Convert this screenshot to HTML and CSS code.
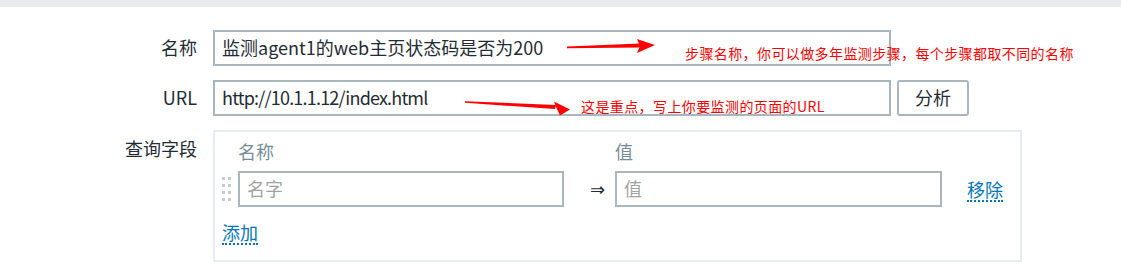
FILE: index.html
```html
<!DOCTYPE html>
<html lang="zh-CN">
<head>
<meta charset="utf-8">
<link rel="stylesheet" href="styles.css">
</head>
<body>
<div class="page">
  <div class="topband"></div>
  <form class="form">
    <div class="label">名称</div>
    <div class="field"><input class="text-input wide" type="text" value="监测agent1的web主页状态码是否为200"></div>

    <div class="label">URL</div>
    <div class="field row">
      <input class="text-input wide url" type="text" value="http://10.1.1.12/index.html">
      <button class="btn" type="button">分析</button>
    </div>

    <div class="label label-top">查询字段</div>
    <div class="field">
      <div class="qbox">
        <div class="qgrid">
          <div></div>
          <div class="qhead">名称</div>
          <div></div>
          <div class="qhead">值</div>
          <div></div>

          <div class="drag"><span></span><span></span><span></span><span></span><span></span><span></span><span></span><span></span></div>
          <input class="text-input cell" type="text" placeholder="名字">
          <div class="implies">⇒</div>
          <input class="text-input cell" type="text" placeholder="值">
          <div class="remove"><a class="link">移除</a></div>
        </div>
        <div class="add"><a class="link">添加</a></div>
      </div>
    </div>
  </form>

  <svg class="overlay" width="1121" height="277" viewBox="0 0 1121 277">
    <polygon class="arrow" points="567,46.6 640,43.4 640,47.6 567,48.2"/>
    <polygon class="arrow" points="637,39 655,45 637,53 640,46"/>
    <polygon class="arrow" points="465,101.2 556,105 555,109 465,102.8"/>
    <polygon class="arrow" points="554,101.5 570,109.5 560,115.5 556,107"/>
  </svg>
  <div class="note note1">步骤名称，你可以做多年监测步骤，每个步骤都取不同的名称</div>
  <div class="note note2">这是重点，写上你要监测的页面的URL</div>
</div>
</body>
</html>
```

FILE: styles.css
```css
* { box-sizing: border-box; }
html, body { margin: 0; padding: 0; background: #fff; }
body {
  font-family: "Noto Sans CJK SC", "Liberation Sans", sans-serif;
  font-size: 18px;
  color: #1f2c33;
}
.page {
  position: relative;
  width: 1121px;
  height: 277px;
  overflow: hidden;
}
.topband {
  height: 7px;
  background: #e9ecef;
}
.form {
  display: grid;
  grid-template-columns: 197px 1fr;
  column-gap: 16px;
  row-gap: 14px;
  padding-top: 23px;
}
.label {
  text-align: right;
  line-height: 34px;
  height: 36px;
}
.label-top {
  line-height: 24px;
  padding-top: 6px;
}
.field { display: flex; }
.row { gap: 6px; }
.text-input {
  height: 36px;
  border: 2px solid #aab6bd;
  padding: 0 7px 2px;
  font: inherit;
  color: #1f2c33;
  background: #fff;
  outline: none;
  margin: 0;
}
.url { letter-spacing: -0.8px; }
.text-input::placeholder { color: #a3a3a3; }
.wide { width: 678px; }
.btn {
  width: 72px;
  height: 36px;
  border: 2px solid #aab6bd;
  border-radius: 3px;
  background: #fff;
  font: inherit;
  color: #1f2c33;
  padding: 0 0 2px;
  margin: 0;
}
.qbox {
  width: 809px;
  height: 132px;
  border: 2px solid #e9ecef;
  padding: 7px 0 0 7px;
}
.qgrid {
  display: grid;
  grid-template-columns: 16px 326px 51px 327px auto;
  grid-template-rows: 24px 36px;
  row-gap: 8px;
  align-items: center;
}
.qhead {
  color: #768d99;
  line-height: 24px;
}
.cell { width: 100%; }
.drag {
  display: grid;
  grid-template-columns: 3px 3px;
  grid-auto-rows: 3px;
  column-gap: 3px;
  row-gap: 4px;
  align-self: center;
}
.drag span { background: #c5cbcf; }
.implies {
  text-align: right;
  padding-right: 10px;
  font-family: "DejaVu Sans", sans-serif;
  font-size: 18px;
  color: #1f2c33;
}
.remove { padding-left: 25px; }
.link {
  display: inline-block;
  color: #0275b8;
  line-height: 22px;
  border-bottom: 2px dotted #0275b8;
  cursor: pointer;
}
.add {
  margin-top: 12px;
}
.overlay {
  position: absolute;
  left: 0;
  top: 0;
  pointer-events: none;
}
.arrow { fill: #ff0000; }
.note {
  position: absolute;
  color: #ff0000;
  font-size: 14px;
  line-height: 20px;
  white-space: nowrap;
  letter-spacing: 0.4px;
}
.note1 { left: 685px; top: 43px; }
.note2 { left: 581px; top: 96px; }
```
